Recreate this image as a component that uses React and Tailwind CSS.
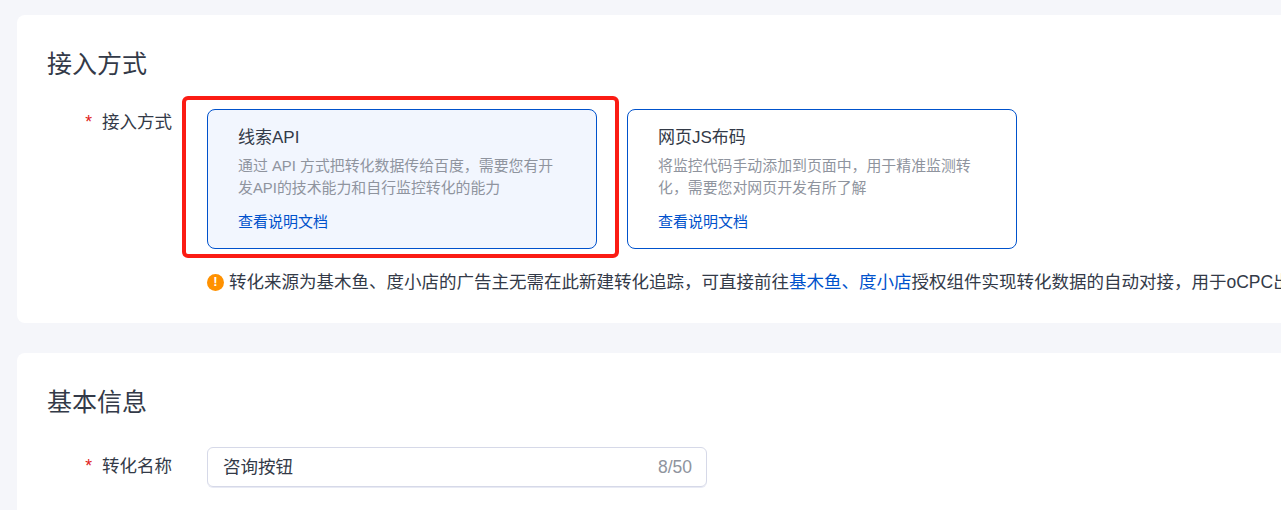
import React from "react";

const font = { fontFamily: '"Liberation Sans", "Noto Sans CJK SC", sans-serif' };

const AccessCard = ({ title, lines }) => (
  <div className="w-[390px] h-[140px] shrink-0 rounded-[8px] border border-[#0052cc] pl-[30px] pt-[15px]">
    <div className="text-[17px] leading-[26px] text-[#333a48]">{title}</div>
    <div className="mt-[4px] text-[14.9px] leading-[22px] text-[#8f949e]">
      {lines.map((line) => (
        <div key={line}>{line}</div>
      ))}
    </div>
    <div className="mt-[12px] text-[15px] leading-[22px] text-[#0052cc]">查看说明文档</div>
  </div>
);

const Label = ({ children, className }) => (
  <div className={`w-[125px] shrink-0 flex justify-end text-[17.5px] leading-[24px] text-[#333a48] ${className}`}>
    <span className="mr-[10px] text-[#e02020]">*</span>
    <span>{children}</span>
  </div>
);

export default function App() {
  return (
    <div className="h-[510px] overflow-hidden bg-[#f5f6fa] pt-[15px] pl-[17px]" style={font}>
      <section className="relative w-[1400px] h-[308px] rounded-[8px] bg-white pl-[30px] pt-[31px]">
        <h2 className="text-[25px] leading-[36px] text-[#333a48]">接入方式</h2>
        <div className="mt-[27px] flex">
          <Label className="pt-[1px]">接入方式</Label>
          <div className="ml-[35px]">
            <div className="flex gap-[30px]">
              <div className="bg-[#f2f6fe] rounded-[8px]">
                <AccessCard
                  title="线索API"
                  lines={["通过 API 方式把转化数据传给百度，需要您有开", "发API的技术能力和自行监控转化的能力"]}
                />
              </div>
              <AccessCard
                title="网页JS布码"
                lines={["将监控代码手动添加到页面中，用于精准监测转", "化，需要您对网页开发有所了解"]}
              />
            </div>
            <div className="mt-[20px] flex items-center whitespace-nowrap text-[17.5px] leading-[26px] text-[#333a48]">
              <span className="mr-[5px] flex h-[17px] w-[17px] items-center justify-center rounded-full bg-[#ff9100] text-[13px] font-bold text-white">!</span>
              转化来源为基木鱼、度小店的广告主无需在此新建转化追踪，可直接前往
              <span className="text-[#0052cc]">基木鱼、度小店</span>
              授权组件实现转化数据的自动对接，用于oCPC出价
            </div>
          </div>
        </div>
        <div className="absolute left-[165px] top-[81px] h-[162px] w-[437px] rounded-[6px] border-[4px] border-[#fb1c14]" />
      </section>

      <section className="mt-[30px] w-[1400px] h-[200px] rounded-[8px] bg-white pl-[30px] pt-[31px]">
        <h2 className="text-[25px] leading-[36px] text-[#333a48]">基本信息</h2>
        <div className="mt-[27px] flex">
          <Label className="pt-[7px]">转化名称</Label>
          <div className="ml-[35px] flex h-[40px] w-[500px] items-center justify-between rounded-[6px] border border-[#d6d9e8] pl-[15px] pr-[14px] pt-[1px] shadow-[0_1px_0_#e8eaf4]">
            <span className="text-[17.5px] text-[#333a48]">咨询按钮</span>
            <span className="text-[17.5px] text-[#8f949e]">8/50</span>
          </div>
        </div>
      </section>
    </div>
  );
}
